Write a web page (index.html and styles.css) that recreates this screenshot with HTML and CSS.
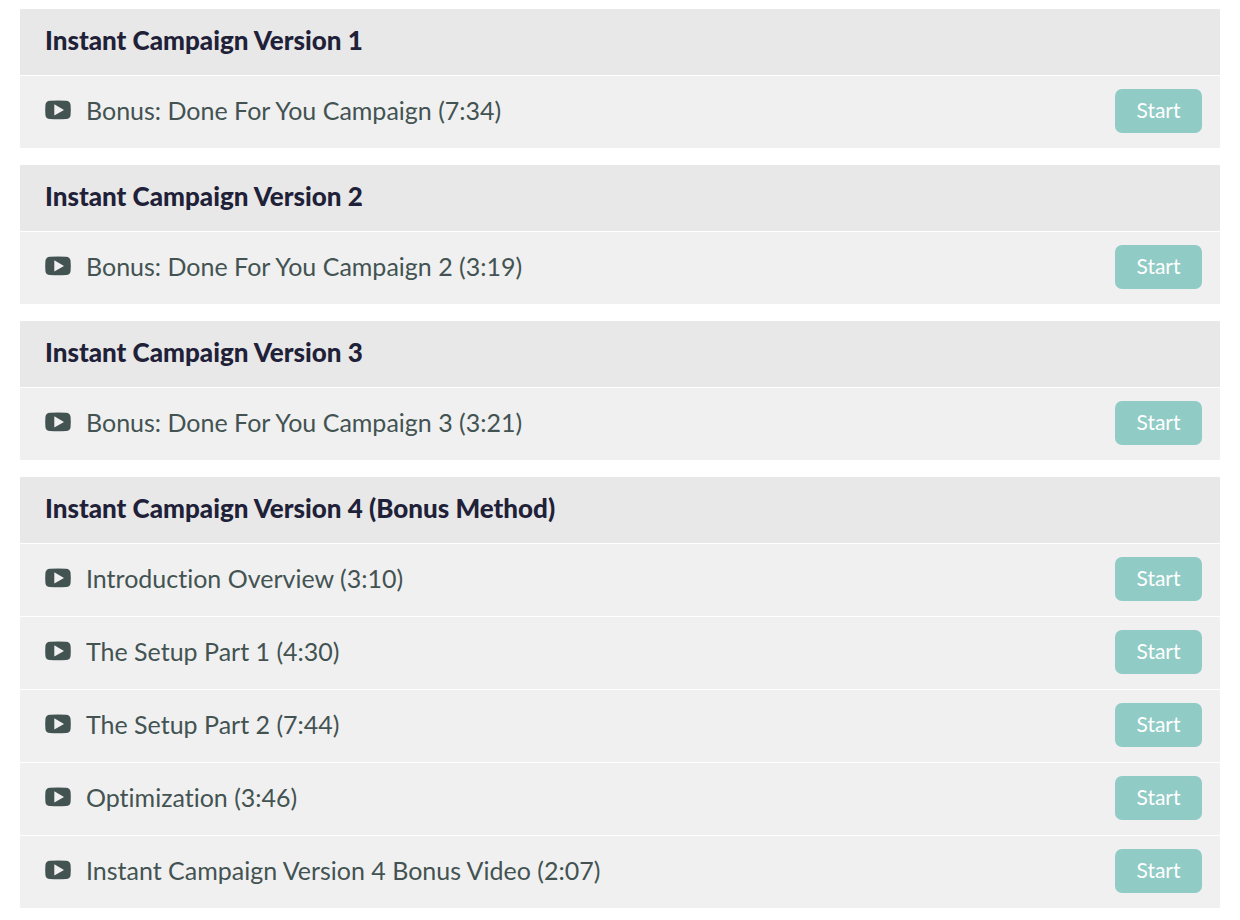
FILE: index.html
```html
<!DOCTYPE html>
<html lang="en">
<head>
    <meta charset="UTF-8">
    <meta name="viewport" content="width=device-width, initial-scale=1.0">
    <title>Course Curriculum</title>
    <link rel="stylesheet" href="styles.css">
</head>
<body>
    <svg class="sprite" aria-hidden="true">
        <symbol id="icon-video" viewBox="0 0 26 20">
            <path fill-rule="evenodd" d="M5 .8Q13 0 21 .8Q25.200 1 25.600 5Q26 10 25.600 15Q25.200 18.800 21 19Q13 19.600 5 19Q.8 18.800 .4 15Q0 10 .4 5Q.8 1 5 .8ZM9.300 4.200V15.600L19 9.900Z"/>
        </symbol>
    </svg>

    <main class="curriculum">
        <section class="course-section">
            <h2 class="section-title">Instant Campaign Version 1</h2>
            <ul class="section-list">
                <li class="section-item">
                    <svg class="icon"><use href="#icon-video"/></svg>
                    <span class="lecture-name">Bonus: Done For You Campaign (7:34)</span>
                    <button type="button" class="btn-start">Start</button>
                </li>
            </ul>
        </section>

        <section class="course-section">
            <h2 class="section-title">Instant Campaign Version 2</h2>
            <ul class="section-list">
                <li class="section-item">
                    <svg class="icon"><use href="#icon-video"/></svg>
                    <span class="lecture-name">Bonus: Done For You Campaign 2 (3:19)</span>
                    <button type="button" class="btn-start">Start</button>
                </li>
            </ul>
        </section>

        <section class="course-section">
            <h2 class="section-title">Instant Campaign Version 3</h2>
            <ul class="section-list">
                <li class="section-item">
                    <svg class="icon"><use href="#icon-video"/></svg>
                    <span class="lecture-name">Bonus: Done For You Campaign 3 (3:21)</span>
                    <button type="button" class="btn-start">Start</button>
                </li>
            </ul>
        </section>

        <section class="course-section">
            <h2 class="section-title">Instant Campaign Version 4 (Bonus Method)</h2>
            <ul class="section-list">
                <li class="section-item">
                    <svg class="icon"><use href="#icon-video"/></svg>
                    <span class="lecture-name">Introduction Overview (3:10)</span>
                    <button type="button" class="btn-start">Start</button>
                </li>
                <li class="section-item">
                    <svg class="icon"><use href="#icon-video"/></svg>
                    <span class="lecture-name">The Setup Part 1 (4:30)</span>
                    <button type="button" class="btn-start">Start</button>
                </li>
                <li class="section-item">
                    <svg class="icon"><use href="#icon-video"/></svg>
                    <span class="lecture-name">The Setup Part 2 (7:44)</span>
                    <button type="button" class="btn-start">Start</button>
                </li>
                <li class="section-item">
                    <svg class="icon"><use href="#icon-video"/></svg>
                    <span class="lecture-name">Optimization (3:46)</span>
                    <button type="button" class="btn-start">Start</button>
                </li>
                <li class="section-item">
                    <svg class="icon"><use href="#icon-video"/></svg>
                    <span class="lecture-name">Instant Campaign Version 4 Bonus Video (2:07)</span>
                    <button type="button" class="btn-start">Start</button>
                </li>
            </ul>
        </section>
    </main>
</body>
</html>
```

FILE: styles.css
```css
* {
    box-sizing: border-box;
}

body {
    margin: 0;
    background-color: #fff;
    color: #435352;
    font-family: Lato, "Open Sans", sans-serif;
    font-size: 25px;
    line-height: 32px;
    font-variant-ligatures: none;
}

.sprite {
    display: none;
}

.curriculum {
    padding: 9px 20px 0;
}

.course-section {
    margin-bottom: 17px;
}

.section-title {
    margin: 0;
    padding: 15px 25px 19px;
    background-color: #e8e8e8;
    color: #1f2138;
    font-size: 26px;
    font-weight: 900;
}

.section-list {
    margin: 0;
    padding: 0;
    list-style: none;
}

.section-item {
    display: flex;
    align-items: center;
    min-height: 73px;
    padding: 0 18px 2px 25px;
    border-top: 1px solid #fff;
    background-color: #f0f0f0;
}

.icon {
    flex: none;
    width: 26px;
    height: 20px;
    margin-right: 15px;
    margin-bottom: 2px;
    fill: #435352;
}

.lecture-name {
    flex: 1;
    padding-bottom: 2px;
}

.btn-start {
    width: 87px;
    height: 44px;
    padding: 0 0 4px;
    border: none;
    border-radius: 7px;
    background-color: #90cbc5;
    color: #fff;
    font-family: inherit;
    font-size: 21px;
    cursor: pointer;
}

.btn-start:hover {
    background-color: #7bbdb6;
}
```
